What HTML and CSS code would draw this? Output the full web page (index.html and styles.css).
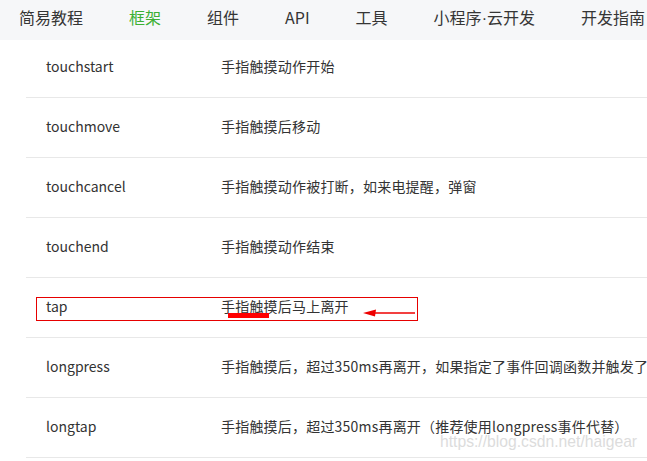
FILE: index.html
```html
<!DOCTYPE html>
<html lang="zh-CN">
<head>
    <meta charset="UTF-8">
    <meta name="viewport" content="width=device-width, initial-scale=1.0">
    <title>事件类型</title>
    <link rel="stylesheet" href="styles.css">
</head>
<body>
    <div class="nav">
        <a>简易教程</a>
        <a class="active">框架</a>
        <a>组件</a>
        <a>API</a>
        <a>工具</a>
        <a>小程序<span class="dot">·</span>云开发</a>
        <a>开发指南</a>
    </div>

    <div class="list">
        <div class="row">
            <div class="name">touchstart</div>
            <div class="desc">手指触摸动作开始</div>
        </div>
        <div class="row">
            <div class="name">touchmove</div>
            <div class="desc">手指触摸后移动</div>
        </div>
        <div class="row">
            <div class="name">touchcancel</div>
            <div class="desc">手指触摸动作被打断，如来电提醒，弹窗</div>
        </div>
        <div class="row">
            <div class="name">touchend</div>
            <div class="desc">手指触摸动作结束</div>
        </div>
        <div class="row marked">
            <div class="name">tap</div>
            <div class="desc">手指触摸后马上离开</div>
            <!-- 标注 -->
            <div class="mark-box"></div>
            <div class="mark-line"></div>
            <svg class="mark-arrow" width="54" height="12" viewBox="0 0 54 12">
                <line x1="8" y1="5" x2="52" y2="5" stroke="#e00" stroke-width="1.3"/>
                <polygon points="0,5 13,1.5 12,8.5" fill="#e00"/>
            </svg>
        </div>
        <div class="row">
            <div class="name">longpress</div>
            <div class="desc">手指触摸后，超过350ms再离开，如果指定了事件回调函数并触发了这个事件，tap事件将不被触发</div>
        </div>
        <div class="row">
            <div class="name">longtap</div>
            <div class="desc">手指触摸后，超过350ms再离开（推荐使用longpress事件代替）</div>
            <div class="watermark">https://blog.csdn.net/haigear</div>
        </div>
    </div>
</body>
</html>
```

FILE: styles.css
```css
body {
    margin: 0;
    font-family: "Noto Sans CJK SC", "Noto Sans", sans-serif;
    color: #333;
    background-color: #fff;
    overflow: hidden;
    white-space: nowrap;
}
.nav {
    position: relative;
    z-index: 2;
    height: 40px;
    display: flex;
    align-items: center;
    gap: 46px;
    padding: 0 0 6px 19px;
    box-sizing: border-box;
    background-color: #f6f7f9;
    font-size: 16px;
    color: #353535;
}
.nav .active {
    color: #3cb034;
}
.nav .dot {
    font-family: "Liberation Sans", Arial, sans-serif;
}
.list {
    margin: -2px 0 0 26px;
}
.row {
    position: relative;
    display: flex;
    align-items: center;
    height: 60px;
    padding-bottom: 4px;
    box-sizing: border-box;
    border-bottom: 1px solid #e8e8e8;
    font-size: 14px;
}
.name {
    width: 195px;
    padding-left: 20px;
    box-sizing: border-box;
    flex-shrink: 0;
}
.desc {
    letter-spacing: 0.2px;
}
.mark-box {
    position: absolute;
    left: 10px;
    top: 19px;
    width: 382px;
    height: 24px;
    border: 1px solid #e60000;
    box-sizing: border-box;
}
.mark-line {
    position: absolute;
    left: 202px;
    top: 35px;
    width: 41px;
    height: 5px;
    background-color: #f00;
}
.mark-arrow {
    position: absolute;
    left: 337px;
    top: 30px;
}
.watermark {
    position: absolute;
    left: 414px;
    top: 35px;
    font-family: "Liberation Sans", Arial, sans-serif;
    font-size: 15.7px;
    color: #dcdcdc;
}
```
